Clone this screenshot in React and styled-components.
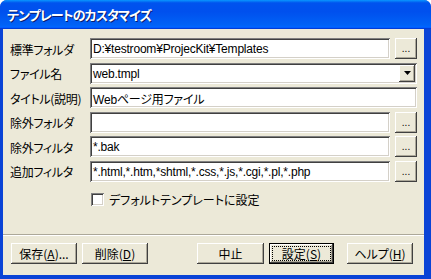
import React from "react";
import styled, { createGlobalStyle } from "styled-components";

const GlobalStyle = createGlobalStyle`
  html, body {
    margin: 0;
    padding: 0;
    background: #fff;
  }
  body {
    font-family: "Liberation Sans", "Noto Sans CJK JP", sans-serif;
    font-size: 12px;
    font-feature-settings: "palt" 1;
  }
`;

const fields = [
  { label: "標準フォルダ", value: "D:¥testroom¥ProjecKit¥Templates", kind: "browse" },
  { label: "ファイル名", value: "web.tmpl", kind: "combo" },
  { label: "タイトル(説明)", value: "Webページ用ファイル", kind: "text" },
  { label: "除外フォルダ", value: "", kind: "browse" },
  { label: "除外フィルタ", value: "*.bak", kind: "browse" },
  { label: "追加フィルタ", value: "*.html,*.htm,*shtml,*.css,*.js,*.cgi,*.pl,*.php", kind: "browse" },
];

export default function App() {
  return (
    <>
      <GlobalStyle />
      <Window>
        <TitleBar>
          <Title>テンプレートのカスタマイズ</Title>
        </TitleBar>
        <Client>
          <Form>
            {fields.map((f) => (
              <React.Fragment key={f.label}>
                <Label>{f.label}</Label>
                {f.kind === "combo" ? (
                  <Combo>
                    <FieldText>{f.value}</FieldText>
                    <DropButton>
                      <svg width="7" height="4" viewBox="0 0 7 4">
                        <path d="M0 0h7L3.5 4z" fill="#000" />
                      </svg>
                    </DropButton>
                  </Combo>
                ) : (
                  <Field $wide={f.kind === "text"}>
                    <FieldText>{f.value}</FieldText>
                  </Field>
                )}
                {f.kind === "browse" && <BrowseButton>...</BrowseButton>}
              </React.Fragment>
            ))}
          </Form>
          <CheckRow>
            <CheckBox />
            <span>デフォルトテンプレートに設定</span>
          </CheckRow>
          <Footer>
            <Separator />
            <ButtonBar>
              <Button $w={66}>
                保存(<u>A</u>)...
              </Button>
              <Button $w={66}>
                削除(<u>D</u>)
              </Button>
              <Spacer />
              <Button $w={67}>中止</Button>
              <Button $w={65} $default>
                <Focus>
                  設定(<u>S</u>)
                </Focus>
              </Button>
              <Button $w={66} $ml={8}>
                ヘルプ(<u>H</u>)
              </Button>
            </ButtonBar>
          </Footer>
        </Client>
      </Window>
    </>
  );
}

//styles
const Window = styled.div`
  width: 431px;
  height: 279px;
  display: flex;
  flex-direction: column;
  box-sizing: border-box;
  border-radius: 7px 7px 0 0;
  overflow: hidden;
  background: #0a43d6;
`;

const TitleBar = styled.div`
  height: 29px;
  flex: none;
  display: flex;
  align-items: center;
  padding-left: 7px;
  background: linear-gradient(
    180deg,
    #0997ff 0%,
    #0053ee 10%,
    #0050ee 40%,
    #0062f6 86%,
    #0066ff 92%,
    #005bff 95%,
    #003dd7 97%,
    #003dd7 100%
  );
`;

const Title = styled.span`
  color: #fff;
  font-family: "Noto Sans CJK JP", sans-serif;
  font-weight: bold;
  font-size: 13px;
  text-shadow: 1px 1px 0 #0a1d6e;
  letter-spacing: -0.9px;
`;

const Client = styled.div`
  flex: 1;
  display: flex;
  flex-direction: column;
  margin: 0 7px 4px 3px;
  background: #ece9d8;
  padding: 9px 7px 11px 7px;
  box-sizing: border-box;
  color: #000;
`;

const Form = styled.div`
  display: grid;
  grid-template-columns: 75px 300px 22px;
  grid-auto-rows: 21px;
  column-gap: 5px;
  row-gap: 3.5px;
`;

const Label = styled.div`
  display: flex;
  align-items: center;
  padding-top: 1px;
  white-space: nowrap;
  font-family: "Noto Sans CJK JP", sans-serif;
  letter-spacing: -0.3px;
`;

const sunken = `
  background: #fff;
  box-sizing: border-box;
  box-shadow: inset 1px 1px #808080, inset -1px -1px #fff,
    inset 2px 2px #404040, inset -2px -2px #d4d0c8;
`;

const raised = `
  background: #ece9d8;
  box-sizing: border-box;
  box-shadow: inset -1px -1px #404040, inset 1px 1px #fff,
    inset -2px -2px #aca899;
`;

const Field = styled.div`
  ${sunken}
  grid-column: ${(p) => (p.$wide ? "2 / 4" : "2")};
  display: flex;
  align-items: center;
  padding: 0 3px;
  overflow: hidden;
`;

const FieldText = styled.span`
  white-space: nowrap;
  padding-top: 1px;
  letter-spacing: -0.2px;
`;

const Combo = styled.div`
  ${sunken}
  grid-column: 2 / 4;
  display: flex;
  align-items: center;
  justify-content: space-between;
  padding: 2px 2px 2px 3px;
`;

const DropButton = styled.div`
  ${raised}
  width: 16px;
  align-self: stretch;
  display: flex;
  align-items: center;
  justify-content: center;
`;

const BrowseButton = styled.div`
  ${raised}
  display: flex;
  align-items: flex-end;
  justify-content: center;
  font-size: 10px;
  padding-bottom: 5px;
  line-height: 1;
`;

const CheckRow = styled.div`
  display: flex;
  align-items: center;
  gap: 5px;
  margin: 9px 0 0 81px;
  font-family: "Noto Sans CJK JP", sans-serif;
`;

const CheckBox = styled.div`
  width: 13px;
  height: 13px;
  ${sunken}
`;

const Footer = styled.div`
  margin-top: auto;
  margin-left: -7px;
  margin-right: -7px;
`;

const Separator = styled.div`
  height: 1px;
  background: #aca899;
  border-bottom: 1px solid #fff;
`;

const ButtonBar = styled.div`
  display: flex;
  gap: 5px;
  padding: 7px 11px 0 8px;
`;

const Spacer = styled.div`
  flex: 1;
`;

const Button = styled.div`
  ${raised}
  width: ${(p) => p.$w}px;
  height: 21px;
  margin-left: ${(p) => p.$ml || 0}px;
  display: flex;
  align-items: center;
  justify-content: center;
  font-family: "Noto Sans CJK JP", sans-serif;
  border: ${(p) => (p.$default ? "1px solid #000" : "none")};
  padding: ${(p) => (p.$default ? "2px" : "0")};
  u {
    text-underline-offset: 1px;
  }
`;

const Focus = styled.div`
  flex: 1;
  align-self: stretch;
  display: flex;
  align-items: center;
  justify-content: center;
  border: 1px dotted #000;
`;
